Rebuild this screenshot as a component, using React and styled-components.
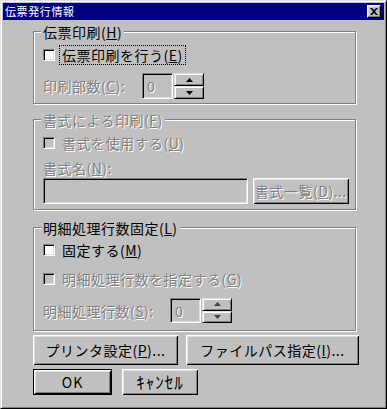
import React from 'react';
import styled, { createGlobalStyle, css } from 'styled-components';

const Global = createGlobalStyle`
  html, body { margin: 0; padding: 0; background: #c0c0c0; }
  body { font-family: "Noto Sans CJK JP", "Noto Sans", sans-serif; }
  * { box-sizing: border-box; }
`;

const Window = styled.div`
  width: 387px;
  height: 409px;
  background: #c0c0c0;
  border: 1px solid;
  border-color: #dfdfdf #000 #000 #dfdfdf;
  box-shadow: inset 1px 1px 0 #fff, inset -1px -1px 0 #808080;
  padding: 2px;
  display: flex;
  flex-direction: column;
`;

const TitleBar = styled.div`
  height: 17px;
  background: #000080;
  display: flex;
  align-items: center;
  justify-content: space-between;
  padding: 0 3px 0 2px;
`;

const TitleText = styled.span`
  color: #fff;
  font-size: 11px;
  letter-spacing: 0.6px;
  line-height: 17px;
`;

const CloseButton = styled.div`
  width: 14px;
  height: 13px;
  background: #c0c0c0;
  border: 1px solid;
  border-color: #fff #000 #000 #fff;
  box-shadow: inset -1px -1px 0 #808080, inset 1px 1px 0 #dfdfdf;
  display: flex;
  align-items: center;
  justify-content: center;
`;

const Content = styled.div`
  display: flex;
  flex-direction: column;
  padding: 11px 28px 0 30px;
`;

const Group = styled.div`
  position: relative;
  margin-top: ${p => p.$mt || 0}px;
  border: 1px solid #808080;
  box-shadow: 1px 1px 0 #fff, inset 1px 1px 0 #fff;
  padding: ${p => p.$pad};
  display: flex;
  flex-direction: column;
`;

const Legend = styled.span`
  position: absolute;
  top: -9px;
  left: 7px;
  background: #c0c0c0;
  padding: 0 2px;
  line-height: 16px;
`;

const Text = styled.span`
  font-size: ${p => p.$size ?? 14}px;
  letter-spacing: ${p => p.$spacing ?? 0.5}px;
  line-height: 16px;
  white-space: nowrap;
  color: ${p => (p.$disabled ? '#808080' : '#000')};
  ${p => p.$disabled && css`text-shadow: 1px 1px 0 #fff;`}
  u { text-decoration: underline; text-underline-offset: 1px; }
`;

const Row = styled.div`
  display: flex;
  align-items: center;
  height: ${p => p.$h || 18}px;
  margin-top: ${p => p.$mt || 0}px;
  gap: ${p => p.$gap || 0}px;
`;

const CheckBox = styled.span`
  width: 12px;
  height: 12px;
  flex: none;
  margin-right: ${p => (p.$focus ? 5 : 7)}px;
  background: ${p => (p.$disabled ? '#c0c0c0' : '#fff')};
  border: 1px solid;
  border-color: #808080 #fff #fff #808080;
  box-shadow: inset 1px 1px 0 #000, inset -1px -1px 0 #dfdfdf;
`;

const FocusLabel = styled.span`
  outline: 1px dotted #000;
  outline-offset: 0;
  padding: 1px 2px;
  display: inline-flex;
`;

const FieldLabel = styled.span`
  width: ${p => p.$w}px;
  flex: none;
  display: flex;
`;

const Edit = styled.div`
  width: ${p => p.$w}px;
  height: ${p => p.$h}px;
  flex: none;
  background: #c0c0c0;
  border: 1px solid;
  border-color: #808080 #fff #fff #808080;
  box-shadow: inset 1px 1px 0 #000, inset -1px -1px 0 #dfdfdf;
  display: flex;
  align-items: center;
  padding-left: 4px;
`;

const Spinner = styled.div`
  width: 30px;
  height: ${p => p.$h}px;
  margin-left: 1px;
  display: flex;
  flex-direction: column;
`;

const SpinButton = styled.div`
  flex: 1;
  background: #c0c0c0;
  border: 1px solid;
  border-color: #dfdfdf #000 #000 #dfdfdf;
  box-shadow: inset 1px 1px 0 #fff, inset -1px -1px 0 #808080;
  display: flex;
  align-items: center;
  justify-content: center;
`;

const PushButton = styled.div`
  width: ${p => p.$w}px;
  height: ${p => p.$h}px;
  flex: none;
  background: #c0c0c0;
  display: flex;
  align-items: center;
  justify-content: center;
  box-shadow: inset 1px 1px 0 #fff, inset -1px -1px 0 #000,
    inset 2px 2px 0 #dfdfdf, inset -2px -2px 0 #808080;
  ${p => p.$default && css`
    border: 1px solid #000;
  `}
`;

const ButtonRow = styled.div`
  display: flex;
  margin-top: ${p => p.$mt}px;
  gap: ${p => p.$gap}px;
`;

const Arrow = ({ up, color }) => (
  <svg width="7" height="4" viewBox="0 0 7 4">
    <path d={up ? 'M3.5 0 L7 4 L0 4 Z' : 'M0 0 L7 0 L3.5 4 Z'} fill={color} />
  </svg>
);

const SpinBox = ({ h, color }) => (
  <Spinner $h={h}>
    <SpinButton><Arrow up color={color} /></SpinButton>
    <SpinButton><Arrow color={color} /></SpinButton>
  </Spinner>
);

export default function App() {
  return (
    <>
      <Global />
      <Window>
        <TitleBar>
          <TitleText>伝票発行情報</TitleText>
          <CloseButton>
            <svg width="8" height="7" viewBox="0 0 8 7">
              <path d="M0 0 L2 0 L4 2 L6 0 L8 0 L5 3.5 L8 7 L6 7 L4 5 L2 7 L0 7 L3 3.5 Z" fill="#000" />
            </svg>
          </CloseButton>
        </TitleBar>
        <Content>
          <Group $pad="14px 6px 4px 9px">
            <Legend><Text>伝票印刷(<u>H</u>)</Text></Legend>
            <Row>
              <CheckBox $focus />
              <FocusLabel><Text>伝票印刷を行う(<u>E</u>)</Text></FocusLabel>
            </Row>
            <Row $h={26} $mt={9}>
              <FieldLabel $w={99}><Text $disabled>印刷部数(<u>C</u>):</Text></FieldLabel>
              <Edit $w={31} $h={26}><Text $disabled>0</Text></Edit>
              <SpinBox h={26} color="#000" />
            </Row>
          </Group>

          <Group $mt={15} $pad="14px 6px 5px 9px">
            <Legend><Text $disabled>書式による印刷(<u>F</u>)</Text></Legend>
            <Row>
              <CheckBox $disabled />
              <Text $disabled>書式を使用する(<u>U</u>)</Text>
            </Row>
            <Row $mt={7}>
              <Text $disabled>書式名(<u>N</u>):</Text>
            </Row>
            <Row $h={26} $mt={1} $gap={5}>
              <Edit $w={205} $h={26} />
              <PushButton $w={96} $h={26}><Text $disabled>書式一覧(<u>D</u>)...</Text></PushButton>
            </Row>
          </Group>

          <Group $mt={17} $pad="13px 6px 7px 9px">
            <Legend><Text>明細処理行数固定(<u>L</u>)</Text></Legend>
            <Row>
              <CheckBox />
              <Text>固定する(<u>M</u>)</Text>
            </Row>
            <Row $mt={11}>
              <CheckBox $disabled />
              <Text $disabled>明細処理行数を指定する(<u>G</u>)</Text>
            </Row>
            <Row $h={25} $mt={10}>
              <FieldLabel $w={127}><Text $disabled>明細処理行数(<u>S</u>):</Text></FieldLabel>
              <Edit $w={31} $h={25}><Text $disabled>0</Text></Edit>
              <SpinBox h={25} color="#404040" />
            </Row>
          </Group>

          <ButtonRow $mt={4} $gap={8}>
            <PushButton $w={145} $h={30}><Text>プリンタ設定(<u>P</u>)...</Text></PushButton>
            <PushButton $w={173} $h={30}><Text>ファイルパス指定(<u>I</u>)...</Text></PushButton>
          </ButtonRow>
          <ButtonRow $mt={4} $gap={10}>
            <PushButton $default $w={79} $h={26}><Text $spacing={1}>OK</Text></PushButton>
            <PushButton $w={76} $h={26}><Text $size={17} $spacing={1}>ｷｬﾝｾﾙ</Text></PushButton>
          </ButtonRow>
        </Content>
      </Window>
    </>
  );
}
